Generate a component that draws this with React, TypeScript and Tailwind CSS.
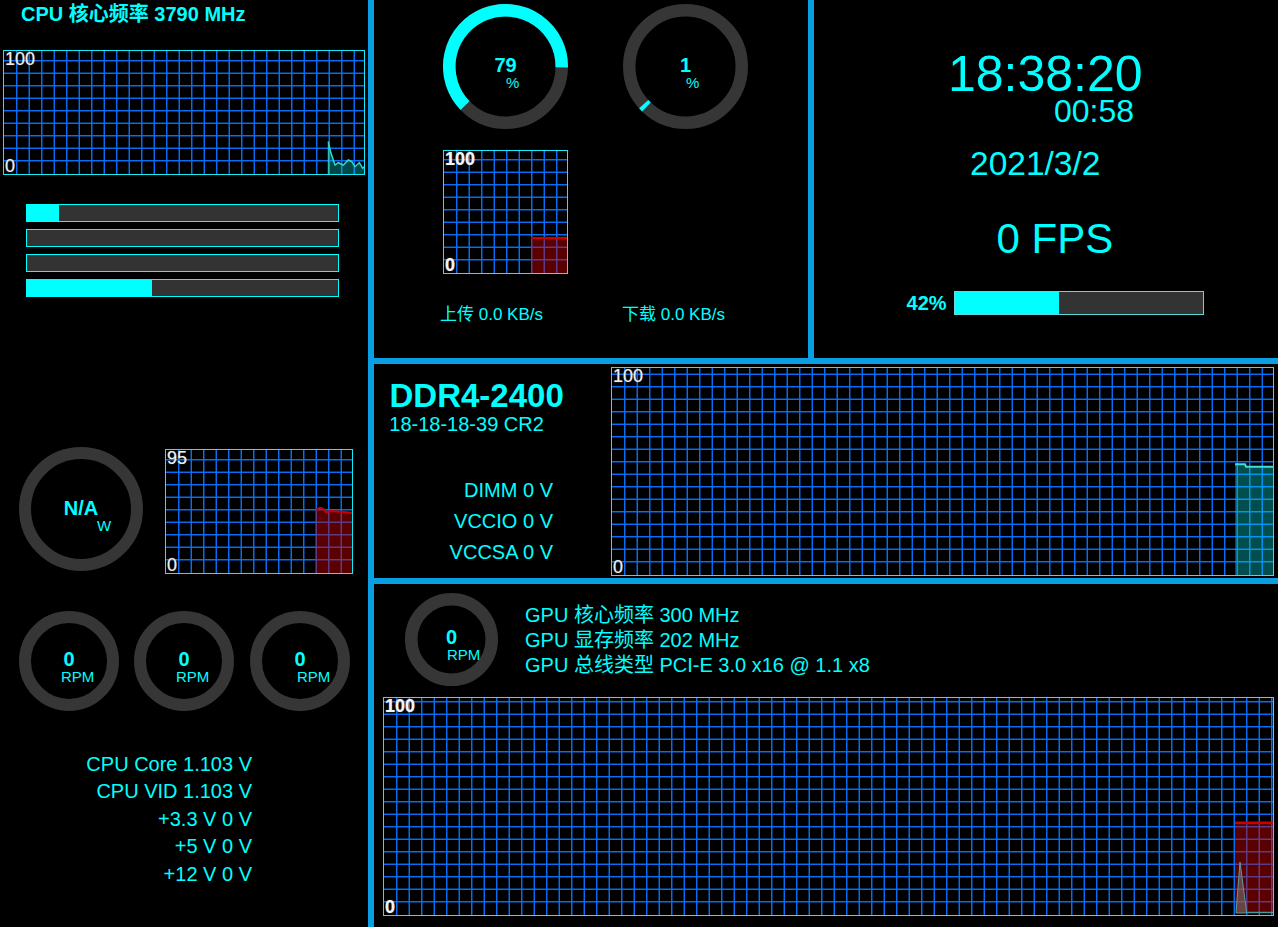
import React from "react";

type ChartProps = {
  w: number;
  h: number;
  top: string;
  bold?: boolean;
  className?: string;
  children?: React.ReactNode;
};

function Chart({ w, h, top, bold, className = "", children }: ChartProps) {
  const vx: number[] = [];
  for (let x = 13.75; x < w - 1.5; x += 12.5) vx.push(x);
  const hy: number[] = [];
  for (let y = h - 14.25; y > 1.5; y -= 12.5) hy.push(y);
  const lbl = bold
    ? "font-bold text-[#f4f4f4] [text-shadow:0_0_1px_#9a9a9a]"
    : "text-[#eeeeee] [text-shadow:0_0_1px_#8a8a8a]";
  return (
    <div className={`relative shrink-0 ${className}`}>
      <svg width={w} height={h} className="block">
        <rect x={0} y={0} width={w} height={h} fill="#000" />
        {vx.map((x) => (
          <rect key={"v" + x} x={x - 0.7} y={0} width={1.4} height={h} fill="#0a72ff" />
        ))}
        {hy.map((y) => (
          <rect key={"h" + y} x={0} y={y - 0.7} width={w} height={1.4} fill="#0a72ff" />
        ))}
        {children}
        <rect x={0.5} y={0.5} width={w - 1} height={h - 1} fill="none" stroke="#14ecf8" strokeWidth={1} shapeRendering="crispEdges" />
      </svg>
      <span className={`absolute left-[2px] top-0 text-[18px] leading-[18px] ${lbl}`}>{top}</span>
      <span className={`absolute left-[2px] bottom-0 text-[18px] leading-[18px] ${lbl}`}>0</span>
    </div>
  );
}

function Ring({ d, t, arc }: { d: number; t: number; arc?: [number, number] }) {
  const c = d / 2;
  const r = (d - t) / 2;
  let path = "";
  if (arc) {
    const p = (a: number) => [c + r * Math.cos((a * Math.PI) / 180), c + r * Math.sin((a * Math.PI) / 180)];
    const [x0, y0] = p(arc[0]);
    const [x1, y1] = p(arc[1]);
    const large = arc[1] - arc[0] > 180 ? 1 : 0;
    path = `M${x0} ${y0} A${r} ${r} 0 ${large} 1 ${x1} ${y1}`;
  }
  return (
    <svg width={d} height={d} className="block">
      <circle cx={c} cy={c} r={r} fill="none" stroke="#363636" strokeWidth={t} />
      {path && <path d={path} fill="none" stroke="#00ffff" strokeWidth={t} />}
    </svg>
  );
}

type GaugeProps = {
  d: number;
  t: number;
  arc?: [number, number];
  value: string;
  unit: string;
  vPos: string;
  uPos: string;
  className?: string;
};

function Gauge({ d, t, arc, value, unit, vPos, uPos, className = "" }: GaugeProps) {
  return (
    <div className={`relative shrink-0 ${className}`}>
      <Ring d={d} t={t} arc={arc} />
      <div className={`absolute inset-x-0 text-center text-[20px] leading-[20px] font-bold text-[#00ffff] ${vPos}`}>
        {value}
      </div>
      <div className={`absolute text-[15px] leading-[15px] text-[#00ffff] whitespace-nowrap ${uPos}`}>{unit}</div>
    </div>
  );
}

function Bar({ pct }: { pct: number }) {
  return (
    <div className="w-[313px] h-[18px] border border-[#00ffff] bg-[#333333] flex">
      <div className="h-full bg-[#00ffff]" style={{ width: `${pct}%` }} />
    </div>
  );
}

export default function App() {
  const cpuPts =
    "325.3,91.7 328,103.3 332,115 335.3,112.7 340.3,115 345.3,110 348.7,111.7 352,116.7 356.3,112.7 359.7,118.3 361,116.7";
  const tempPts = "151,61 154.3,58.7 157.7,59.3 161,63.3 165,62 175,62.7 187,63.7";
  return (
    <div className="w-[1278px] h-[927px] bg-black flex overflow-hidden font-['Liberation_Sans','Noto_Sans_CJK_SC',sans-serif] text-[#00ffff]">
      {/* Left column */}
      <div className="w-[368px] shrink-0 flex flex-col items-start">
        <div className="ml-[21px] mt-[2px] text-[20px] leading-[24px] font-bold whitespace-nowrap">
          CPU 核心频率 3790 MHz
        </div>
        <Chart className="ml-[3px] mt-[24px]" w={362} h={125} top="100">
          <polygon points={`${cpuPts} 361,124 325.3,124`} fill="rgba(0,220,220,0.32)" />
          <polyline points={cpuPts} fill="none" stroke="#2fd6d0" strokeWidth={1.5} />
          <line x1={325.3} y1={91.7} x2={325.3} y2={124} stroke="#2fd6d0" strokeWidth={1} />
        </Chart>
        <div className="ml-[26px] mt-[29px] flex flex-col gap-[7px]">
          <Bar pct={10.3} />
          <Bar pct={0} />
          <Bar pct={0} />
          <Bar pct={40.2} />
        </div>
        <div className="mt-[150px] flex items-start">
          <Gauge
            className="ml-[19px]"
            d={124}
            t={12}
            value="N/A"
            unit="W"
            vPos="top-[50.7px]"
            uPos="left-[78px] top-[71.2px]"
          />
          <Chart className="ml-[22px] mt-[2px]" w={188} h={125} top="95">
            <polygon points={`${tempPts} 188,124 151,124`} fill="rgba(200,0,0,0.45)" />
            <polyline points={tempPts} fill="none" stroke="#cc0000" strokeWidth={2} />
          </Chart>
        </div>
        <div className="mt-[37px] flex items-start">
          <Gauge
            className="ml-[19px]"
            d={100}
            t={12}
            value="0"
            unit="RPM"
            vPos="top-[38px]"
            uPos="left-[42px] top-[57.7px]"
          />
          <Gauge
            className="ml-[15px]"
            d={100}
            t={12}
            value="0"
            unit="RPM"
            vPos="top-[38px]"
            uPos="left-[42px] top-[57.7px]"
          />
          <Gauge
            className="ml-[16px]"
            d={100}
            t={12}
            value="0"
            unit="RPM"
            vPos="top-[38px]"
            uPos="left-[47px] top-[57.7px]"
          />
        </div>
        <div className="mt-[39.5px] w-[252px] text-right text-[20px] leading-[27.5px] whitespace-nowrap">
          <div>CPU Core 1.103 V</div>
          <div>CPU VID 1.103 V</div>
          <div>+3.3 V 0 V</div>
          <div>+5 V 0 V</div>
          <div>+12 V 0 V</div>
        </div>
      </div>

      <div className="w-[6px] shrink-0 bg-[#0a9fe3]" />

      {/* Right area */}
      <div className="flex-1 flex flex-col">
        {/* Top row */}
        <div className="h-[358px] shrink-0 flex">
          <div className="w-[434px] shrink-0 flex flex-col items-start pl-[69px]">
            <div className="mt-[4px] flex gap-[55px]">
              <Gauge
                d={125}
                t={12.5}
                arc={[136, 361]}
                value="79"
                unit="%"
                vPos="top-[50.7px]"
                uPos="left-[63px] top-[71.2px]"
              />
              <Gauge
                d={125}
                t={12.5}
                arc={[134, 138]}
                value="1"
                unit="%"
                vPos="top-[50.7px]"
                uPos="left-[63px] top-[71.2px]"
              />
            </div>
            <Chart className="mt-[21px]" w={125} h={124} top="100" bold>
              <rect x={88} y={88} width={36} height={35} fill="rgba(200,0,0,0.45)" />
              <line x1={88} y1={88} x2={124} y2={88} stroke="#cc0000" strokeWidth={2} />
            </Chart>
            <div className="mt-[31px] ml-[-3px] flex text-[17px] leading-[20px] whitespace-nowrap">
              <span className="w-[182px]">上传 0.0 KB/s</span>
              <span>下载 0.0 KB/s</span>
            </div>
          </div>
          <div className="w-[6px] shrink-0 bg-[#0a9fe3]" />
          <div className="flex-1 flex flex-col items-start">
            <div className="ml-[134px] mt-[53.5px] text-[50px] leading-[40px] whitespace-nowrap">18:38:20</div>
            <div className="ml-[240px] mt-[4.3px] text-[32px] leading-[26px] whitespace-nowrap">00:58</div>
            <div className="ml-[156px] mt-[22.8px] text-[33.5px] leading-[34px] whitespace-nowrap">2021/3/2</div>
            <div className="ml-[182.5px] mt-[37px] text-[42px] leading-[42px] whitespace-nowrap">0 FPS</div>
            <div className="ml-[92.6px] mt-[31.5px] flex items-center">
              <span className="text-[20px] leading-[20px] font-bold">42%</span>
              <div className="ml-[7.4px] w-[250px] h-[24px] border border-[#5fd8e0] bg-[#333333] flex">
                <div className="h-full bg-[#00ffff]" style={{ width: "42%" }} />
              </div>
            </div>
          </div>
        </div>

        <div className="h-[6px] shrink-0 bg-[#0a9fe3]" />

        {/* Middle row */}
        <div className="h-[214px] shrink-0 flex items-start">
          <div className="w-[237px] shrink-0 flex flex-col items-start">
            <div className="ml-[15.5px] mt-[14.7px] text-[33px] leading-[33px] font-bold whitespace-nowrap">DDR4-2400</div>
            <div className="ml-[15.3px] mt-[2.7px] text-[20px] leading-[20px] whitespace-nowrap">18-18-18-39 CR2</div>
            <div className="mt-[40.3px] w-[179px] text-right text-[20px] leading-[31px] whitespace-nowrap">
              <div>DIMM 0 V</div>
              <div>VCCIO 0 V</div>
              <div>VCCSA 0 V</div>
            </div>
          </div>
          <Chart className="mt-[3px]" w={663} h={209} top="100">
            <polygon points="624,97.3 634,97.3 635,99.7 662,99.7 662,208 624,208" fill="rgba(0,230,230,0.34)" />
            <polyline points="624,97.3 634,97.3 635,99.7 662,99.7" fill="none" stroke="#3fe0d8" strokeWidth={2} />
          </Chart>
        </div>

        <div className="h-[6px] shrink-0 bg-[#0a9fe3]" />

        {/* Bottom row */}
        <div className="flex-1 flex flex-col items-start">
          <div className="flex items-start">
            <Gauge
              className="ml-[31px] mt-[9px]"
              d={93}
              t={12.5}
              value="0"
              unit="RPM"
              vPos="top-[33.7px]"
              uPos="left-[42px] top-[54.2px]"
            />
            <div className="ml-[27px] mt-[18.7px] text-[20px] leading-[25px] whitespace-nowrap">
              <div>GPU 核心频率 300 MHz</div>
              <div>GPU 显存频率 202 MHz</div>
              <div>GPU 总线类型 PCI-E 3.0 x16 @ 1.1 x8</div>
            </div>
          </div>
          <Chart className="ml-[9px] mt-[11px]" w={891} h={219} top="100" bold>
            <rect x={852} y={125.7} width={38} height={90} fill="rgba(200,0,0,0.45)" />
            <line x1={852} y1={125.7} x2={890} y2={125.7} stroke="#cc0000" strokeWidth={2.5} />
            <polygon points="853,216 857,165 863.7,216" fill="rgba(120,120,120,0.55)" stroke="#5f9a9a" strokeWidth={1} />
            <line x1={863} y1={215.5} x2={890} y2={215.5} stroke="#4a9a9a" strokeWidth={1.5} />
          </Chart>
        </div>
      </div>
    </div>
  );
}
